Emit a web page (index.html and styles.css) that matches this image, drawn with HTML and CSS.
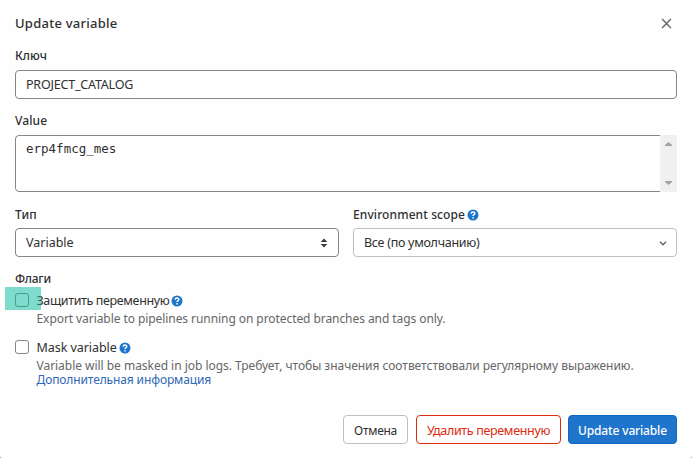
FILE: index.html
```html
<!DOCTYPE html>
<html lang="ru">
<head>
<meta charset="utf-8">
<title>Update variable</title>
<link rel="stylesheet" href="styles.css">
</head>
<body>
<main class="modal">
  <header class="header">
    <h1 class="title"><span>Update variable</span></h1>
    <svg class="close" viewBox="0 0 10 10"><path d="M1 1l8 8M9 1l-8 8"/></svg>
  </header>
  <div class="label label-key"><span>Ключ</span></div>
  <div class="control key"><span class="t-key">PROJECT_CATALOG</span></div>
  <div class="label label-value"><span>Value</span></div>
  <div class="control value">
    <span class="code">erp4fmcg_mes</span>
    <div class="scrollbar">
      <svg viewBox="0 0 7 4"><path d="M0 4V3L3.5 0L7 3V4z"/></svg>
      <svg viewBox="0 0 7 4"><path d="M0 0V1L3.5 4L7 1V0z"/></svg>
    </div>
  </div>
  <div class="columns">
    <section>
      <div class="label"><span>Тип</span></div>
      <div class="control select"><span>Variable</span>
        <svg class="sort" viewBox="0 0 8 10"><path d="M.6 4L4 .4L7.400 4zM.6 6L4 9.600L7.400 6z"/></svg>
      </div>
    </section>
    <section>
      <div class="label"><span class="t-env">Environment scope</span><svg class="help" viewBox="0 0 12 12"><circle cx="6" cy="6" r="5.500"/><path d="M4.200 4.700C4.200 2.500 7.800 2.600 7.800 4.500C7.800 5.700 6 5.600 6 7M6 8V9.400"/></svg></div>
      <div class="control select light"><span class="t-all">Все (по умолчанию)</span>
        <svg class="chevron" viewBox="0 0 8 5"><path d="M1 .8L4 3.800L7 .8"/></svg>
      </div>
    </section>
  </div>
  <div class="label label-flags"><span class="t-flags">Флаги</span></div>
  <div class="flag marked">
    <i class="box"></i>
    <div>
      <div class="name"><span class="t-protect">Защитить переменную</span><svg class="help" viewBox="0 0 12 12"><circle cx="6" cy="6" r="5.500"/><path d="M4.200 4.700C4.200 2.500 7.800 2.600 7.800 4.500C7.800 5.700 6 5.600 6 7M6 8V9.400"/></svg></div>
      <div class="hint"><span class="t-export">Export variable to pipelines running on protected branches and tags only.</span></div>
    </div>
  </div>
  <div class="flag">
    <i class="box"></i>
    <div>
      <div class="name"><span class="t-mask">Mask variable</span><svg class="help" viewBox="0 0 12 12"><circle cx="6" cy="6" r="5.500"/><path d="M4.200 4.700C4.200 2.500 7.800 2.600 7.800 4.500C7.800 5.700 6 5.600 6 7M6 8V9.400"/></svg></div>
      <div class="hint"><span class="t-logs">Variable will be masked in job logs. Требует, чтобы значения соответствовали регулярному выражению.</span></div>
      <div class="hint link"><span>Дополнительная информация</span></div>
    </div>
  </div>
  <footer class="footer">
    <div class="button cancel"><span>Отмена</span></div>
    <div class="button danger"><span>Удалить переменную</span></div>
    <div class="button primary"><span>Update variable</span></div>
  </footer>
</main>
</body>
</html>
```

FILE: styles.css
```css
* { box-sizing: border-box; }
body {
  margin: 0;
  background: #888;
  color: #303030;
  font: 12.5px/16px "Noto Sans", "Open Sans", sans-serif;
  overflow: hidden;
}
span { white-space: nowrap; }
svg { display: block; flex: none; }
.modal { height: 458px; padding: 15px 15px 0; background: #fefefe; border-radius: 0 0 2px 2px; }
.header { display: flex; justify-content: space-between; align-items: center; width: 657px; height: 16px; }
.title { margin: 0; font-size: 13px; line-height: 16px; font-weight: 500; letter-spacing: .25px; }
.close { width: 11px; height: 11px; fill: none; stroke: #666; stroke-width: 1.3; }
.label { display: flex; align-items: center; height: 16px; padding-top: 1px; font-size: 12px; font-weight: 500; letter-spacing: .1px; }
.label-key { margin-top: 16px; }
.label-value { margin-top: 13px; }
.control {
  display: flex;
  align-items: center;
  width: 662px;
  height: 29px;
  margin-top: 7px;
  padding: 1px 10px 0;
  border: 1px solid #868686;
  border-radius: 4px;
  background: #fff;
}
.value { height: 57px; padding: 5px 0 0 10px; align-items: flex-start; justify-content: space-between; }
.code { font: 12.5px/16px "DejaVu Sans Mono", monospace; }
.scrollbar {
  display: flex;
  flex-direction: column;
  justify-content: space-between;
  align-items: center;
  width: 17px;
  height: 57px;
  margin: -6px -1px 0 0;
  padding: 7px 0;
  background: #f0f0f0;
}
.scrollbar svg { width: 7px; height: 4px; fill: #a3a3a3; }
.columns { display: grid; grid-template-columns: 324px 324px; gap: 14px; margin-top: 14px; }
.select { width: 324px; margin-top: 6px; justify-content: space-between; }
.light { border-color: #bfbfbf; }
.sort { width: 8px; height: 10px; fill: #404040; }
.chevron { width: 8px; height: 5px; margin-right: -1px; fill: none; stroke: #666; stroke-width: 1.4; }
.help { width: 12px; height: 12px; margin-left: 2px; fill: #1f75cb; }
.help path { fill: none; stroke: #fff; stroke-width: 1.4; }
.label-flags { margin-top: 13px; }
.flag { position: relative; display: flex; margin-top: 6px; }
.flag + .flag { margin-top: 13px; }
.box { width: 14px; height: 14px; margin: 1px 7.5px 0 0; border: 1px solid #868686; border-radius: 3px; background: #fff; flex: none; }
.name { display: flex; align-items: center; height: 16px; padding-top: 1px; }
.hint { height: 14px; line-height: 14px; margin-top: 4px; color: #666; font-size: 12px; }
.link { margin-top: 0; color: #2f68b4; letter-spacing: -.12px; }
.t-key { letter-spacing: -.2px; }
.t-all { letter-spacing: -.28px; }
.t-flags { letter-spacing: -.2px; }
.t-protect { letter-spacing: -.36px; }
.t-mask { letter-spacing: -.06px; }
.t-export { letter-spacing: -.07px; }
.t-logs { letter-spacing: -.03px; }
.marked::after {
  content: "";
  position: absolute;
  left: -10px;
  top: -5px;
  width: 36px;
  height: 23px;
  background: rgba(0, 186, 154, .5);
}
.footer { display: flex; justify-content: flex-end; gap: 8px; width: 662px; margin-top: 28px; }
.button { display: flex; align-items: center; justify-content: center; height: 29px; padding-top: 2px; border: 1px solid #bfbfbf; border-radius: 4px; background: #fff; }
.cancel { width: 65px; font-size: 12px; letter-spacing: -.3px; }
.danger { width: 145px; color: #dd2b0e; border-color: #dd2b0e; letter-spacing: -.33px; }
.primary { width: 109px; margin-left: -1px; background: #1f75cb; border-color: #1068bf; color: #fff; font-weight: 500; font-size: 12px; letter-spacing: -.15px; }
```
